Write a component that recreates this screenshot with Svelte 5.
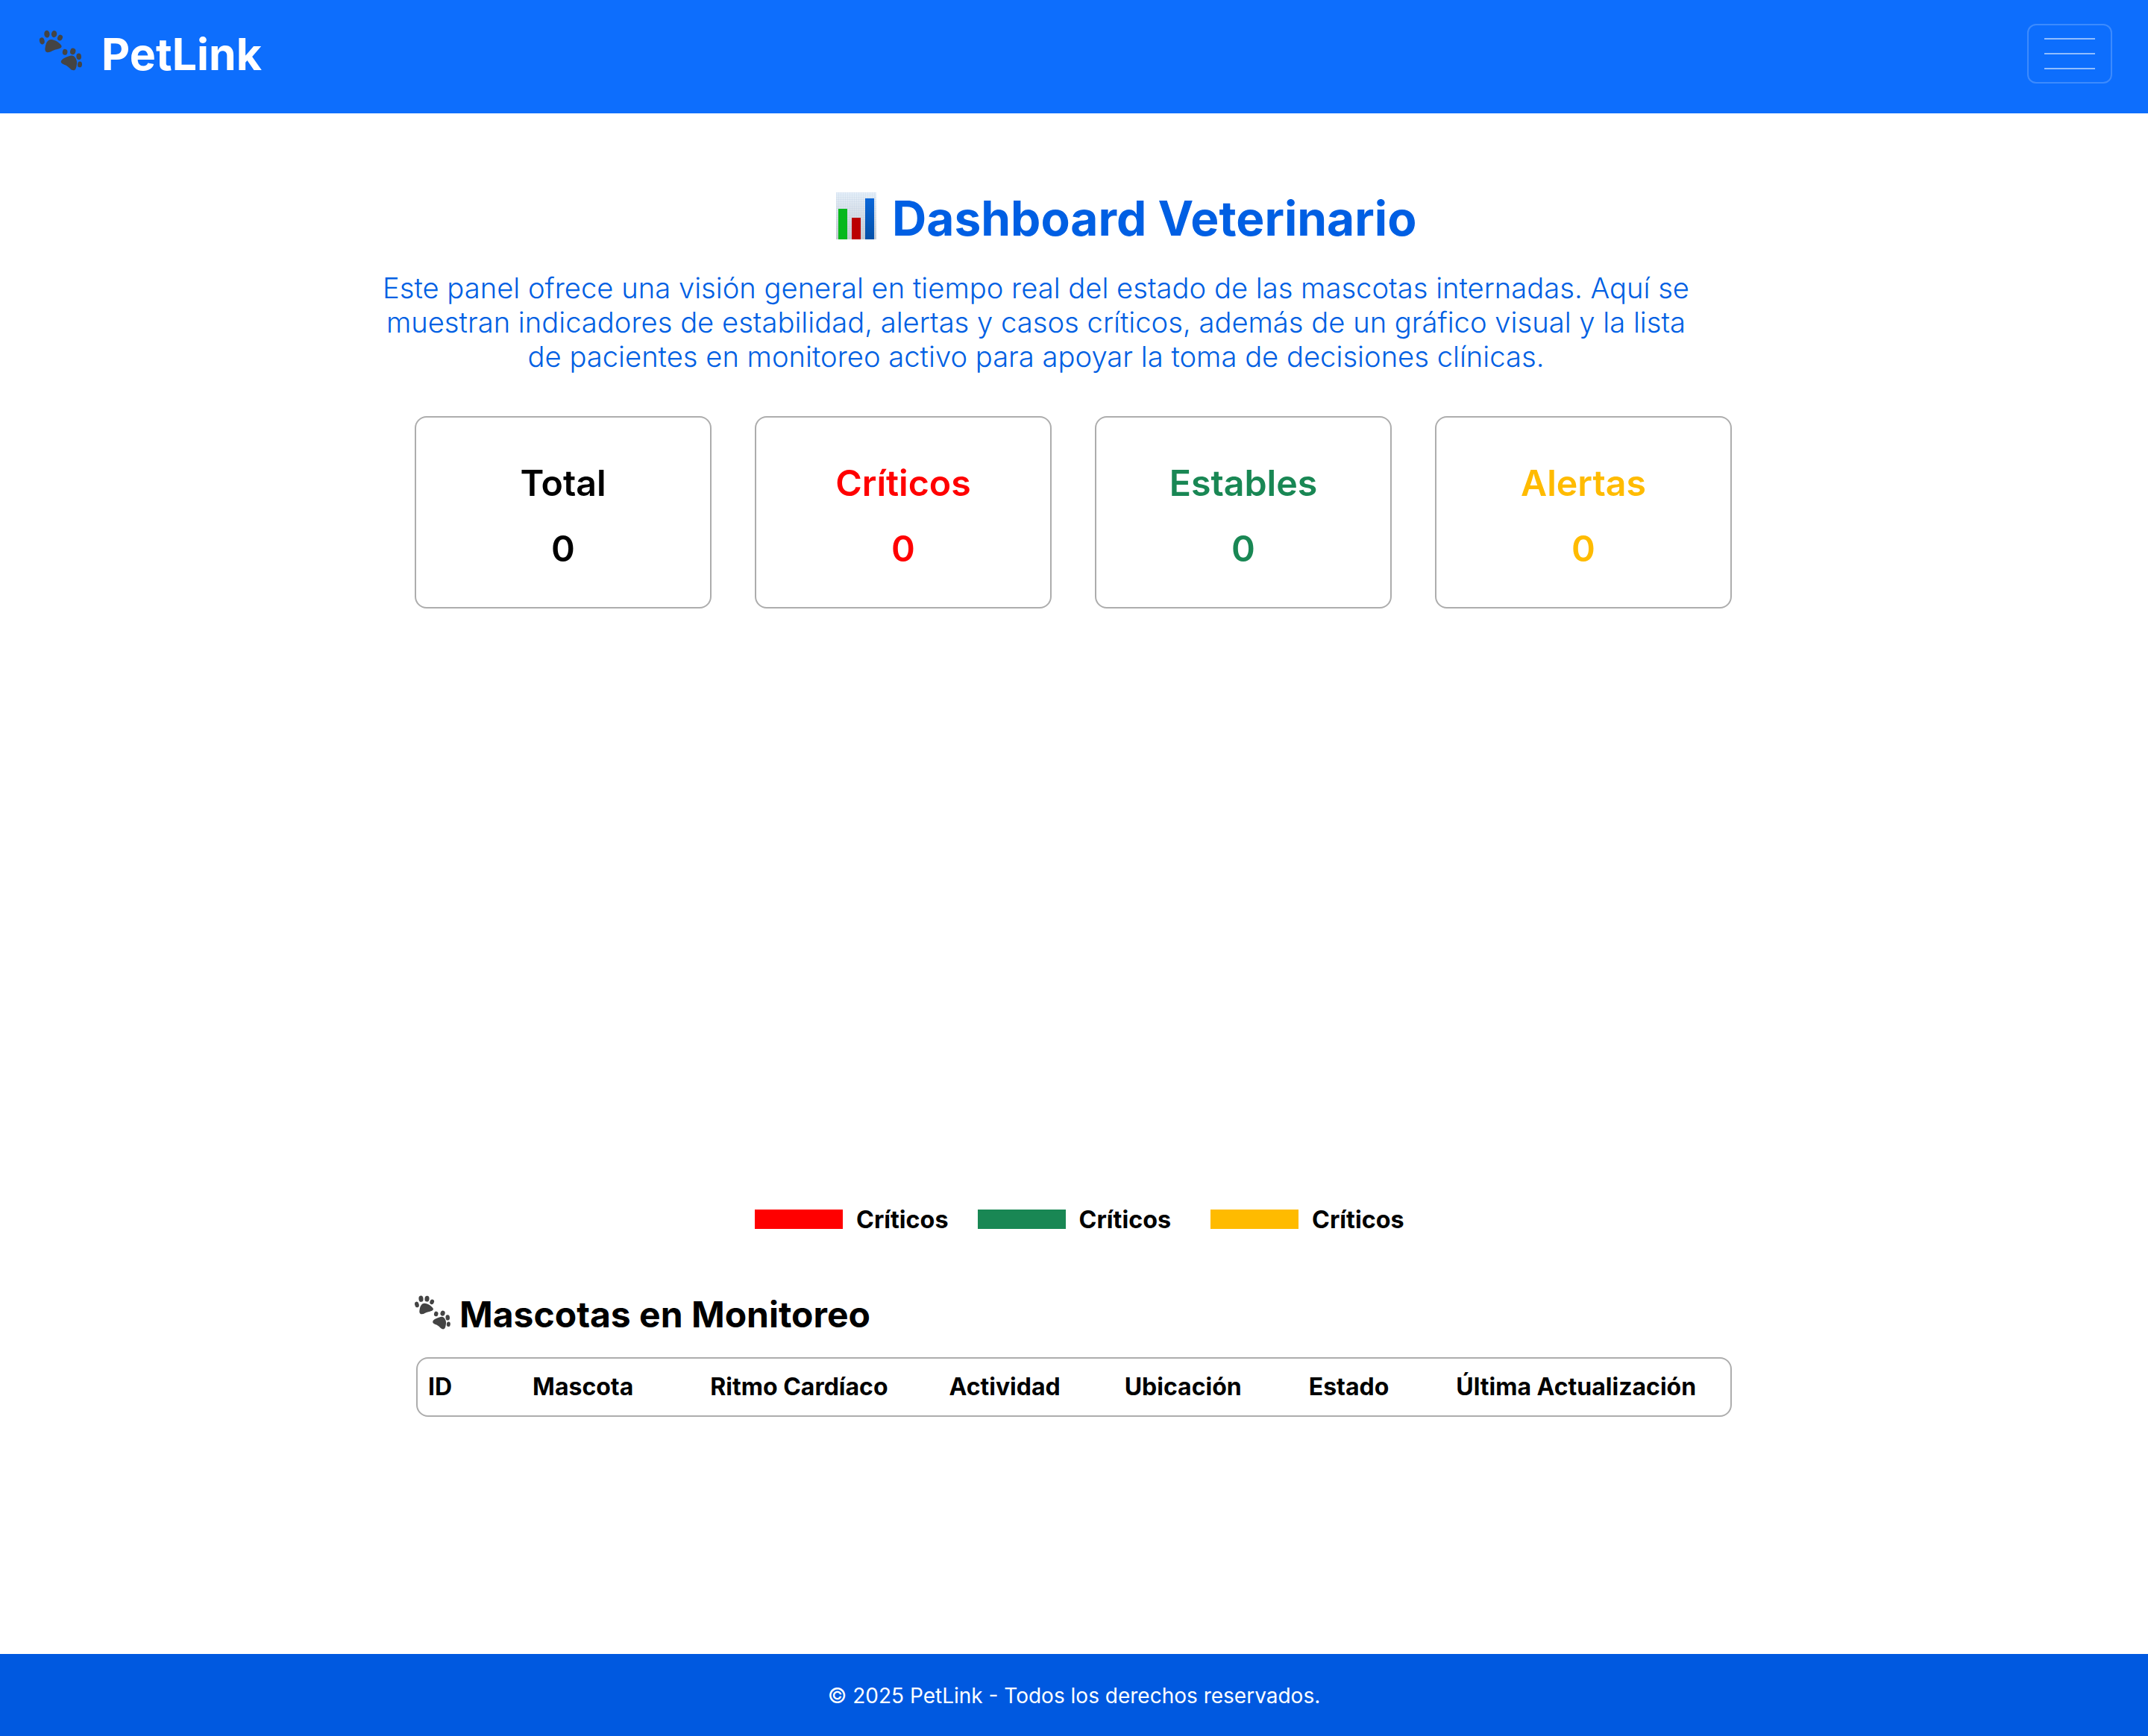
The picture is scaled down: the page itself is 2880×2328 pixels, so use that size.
<script>
  const cards = [
    { label: 'Total', tone: 'black' },
    { label: 'Críticos', tone: 'red' },
    { label: 'Estables', tone: 'green' },
    { label: 'Alertas', tone: 'amber' }
  ];
  const legend = [
    { tone: 'red', gap: 'l1' },
    { tone: 'green', gap: 'l2' },
    { tone: 'amber', gap: 'l3' }
  ];
  const cols = ['ID', 'Mascota', 'Ritmo Cardíaco', 'Actividad', 'Ubicación', 'Estado', 'Última Actualización'];
</script>

{#snippet paws()}
  <svg class="paws" viewBox="34 33 178 166" aria-hidden="true">
    <g fill="#444">
      <ellipse cx="47" cy="78" rx="10" ry="14" transform="rotate(-15 47 78)" />
      <ellipse cx="67" cy="50" rx="11" ry="15" transform="rotate(-5 67 50)" />
      <ellipse cx="96" cy="50" rx="11" ry="14" transform="rotate(5 96 50)" />
      <ellipse cx="120" cy="65" rx="10" ry="12" transform="rotate(25 120 65)" />
      <path d="M84 72C100 72 122 88 126 98 128 106 118 110 106 112 92 114 82 124 70 124 60 124 58 114 60 104 62 90 68 72 84 72Z" />
      <ellipse cx="140" cy="123" rx="10" ry="12" transform="rotate(10 140 123)" />
      <ellipse cx="172" cy="120" rx="11" ry="13" transform="rotate(15 172 120)" />
      <ellipse cx="196" cy="141" rx="10" ry="13" transform="rotate(-5 196 141)" />
      <ellipse cx="200" cy="173" rx="9" ry="12" transform="rotate(5 200 173)" />
      <path d="M124 160C126 150 150 140 165 137 180 135 190 155 188 170 186 185 184 197 174 197 164 197 158 185 146 178 134 172 122 170 124 160Z" />
    </g>
  </svg>
{/snippet}

<header class="nav">
  <a class="brand" href="#top">
    {@render paws()}
    <span>PetLink</span>
  </a>
  <button class="toggler" aria-label="Menu">
    <span></span><span></span><span></span>
  </button>
</header>

<main>
  <h1>
    <svg class="chart" viewBox="0 0 54 63" aria-hidden="true">
      <defs>
        <linearGradient id="bg" x1="0" y1="0" x2="0" y2="1">
          <stop offset="0" stop-color="#e6f0fa" />
          <stop offset="1" stop-color="#c6cad0" />
        </linearGradient>
        <linearGradient id="blue" x1="0" y1="0" x2="0" y2="1">
          <stop offset="0" stop-color="#0a66d8" />
          <stop offset="1" stop-color="#0450a8" />
        </linearGradient>
        <pattern id="grid" width="3" height="3" patternUnits="userSpaceOnUse">
          <path d="M3 0H0V3" fill="none" stroke="#a9bdd4" stroke-width="0.6" opacity="0.5" />
        </pattern>
      </defs>
      <rect width="54" height="63" fill="url(#bg)" />
      <rect width="54" height="63" fill="url(#grid)" />
      <rect x="3" y="22" width="12" height="41" fill="#07b81c" />
      <rect x="21" y="34" width="12" height="29" fill="#bb0000" />
      <rect x="39" y="8" width="12" height="55" fill="url(#blue)" />
    </svg>
    Dashboard Veterinario
  </h1>
  <p class="intro">
    Este panel ofrece una visión general en tiempo real del estado de las mascotas internadas. Aquí se
    muestran indicadores de estabilidad, alertas y casos críticos, además de un gráfico visual y la lista
    de pacientes en monitoreo activo para apoyar la toma de decisiones clínicas.
  </p>

  <section class="cards">
    {#each cards as c}
      <div class="card {c.tone}">
        <h3>{c.label}</h3>
        <p>0</p>
      </div>
    {/each}
  </section>

  <div class="legend">
    {#each legend as l}
      <span class="item {l.gap}"><i class={l.tone}></i>Críticos</span>
    {/each}
  </div>

  <h2>{@render paws()}Mascotas en Monitoreo</h2>
  <div class="table">
    {#each cols as c}
      <span>{c}</span>
    {/each}
  </div>
</main>

<footer>© 2025 PetLink - Todos los derechos reservados.</footer>

<style>
  :global(body) { margin: 0; background: #fff; font-family: Inter, "Liberation Sans", sans-serif; }

  .nav {
    height: 152px; box-sizing: border-box; background: #0d6efd; display: flex; align-items: center;
    justify-content: space-between; padding: 0 48px 9px;
  }
  .brand {
    display: flex; align-items: center; gap: 25px; color: #fff; text-decoration: none;
    font-size: 59px; font-weight: 700; line-height: 1;
  }
  .brand .paws { width: 59px; height: 55px; margin: 0 0 9px 4px; }
  .brand span { margin-top: 2px; }
  .toggler {
    width: 114px; height: 80px; box-sizing: border-box; background: none; padding: 0;
    border: 2px solid rgba(255, 255, 255, 0.2); border-radius: 12px;
    display: flex; flex-direction: column; align-items: center; justify-content: center; gap: 18px;
  }
  .toggler span { width: 68px; height: 2px; background: rgba(255, 255, 255, 0.55); }

  main { height: 2066px; box-sizing: border-box; padding-top: 98px; }
  h1 {
    margin: 0 0 0 1121px; display: flex; align-items: center; gap: 21px; height: 86px;
    color: #005fe3; font-size: 64px; font-weight: 700; line-height: 1; white-space: nowrap;
  }
  .chart { width: 54px; height: 63px; margin-bottom: 8px; }
  .intro {
    margin: 27px 0 0 499px; width: 1780px; text-align: center; color: #005fe3;
    font-size: 38.2px; font-weight: 300; line-height: 46px;
  }

  .cards { margin: 57px 0 0 556px; display: flex; gap: 58px; }
  .card {
    width: 398px; height: 258px; box-sizing: border-box; border: 2px solid #adadad; border-radius: 16px;
    text-align: center; padding-top: 60px;
  }
  .card h3 { margin: 0; font-size: 48.3px; font-weight: 600; line-height: 56px; }
  .card p { margin: 32px 0 0; font-size: 48.3px; font-weight: 600; line-height: 56px; }
  .black { color: #000; }
  .red { color: #f00; }
  .green { color: #198754; }
  .amber { color: #ffbb00; }

  .legend {
    margin: 795px 0 0 1012px; display: flex; align-items: center; height: 48px;
    font-size: 32.3px; font-weight: 700; color: #000;
  }
  .item { display: flex; align-items: center; }
  .item i { width: 118px; height: 26px; margin-right: 18px; }
  .item i.red { background: #f00; }
  .item i.green { background: #198754; }
  .item i.amber { background: #ffbb00; }
  .l2 { margin-left: 39px; }
  .l3 { margin-left: 53px; }

  h2 {
    margin: 71px 0 0 555px; display: flex; align-items: center; gap: 11px; height: 64px;
    font-size: 48px; font-weight: 700; color: #000; white-space: nowrap;
  }
  h2 .paws { width: 50px; height: 46px; margin-bottom: 5px; }
  .table {
    margin: 26px 0 0 558px; width: 1764px; height: 80px; box-sizing: border-box;
    border: 2px solid #adadad; border-radius: 16px; display: flex; align-items: center;
    padding: 0 0 2px 14px; font-size: 32px; font-weight: 700; color: #000; white-space: nowrap;
  }
  .table span:nth-child(2) { margin-left: 108px; }
  .table span:nth-child(3) { margin-left: 103px; }
  .table span:nth-child(4) { margin-left: 82px; }
  .table span:nth-child(5) { margin-left: 86px; }
  .table span:nth-child(6) { margin-left: 90px; }
  .table span:nth-child(7) { margin-left: 90px; }

  footer {
    height: 110px; box-sizing: border-box; padding-top: 1px; background: #0059e0; color: #fff; display: flex;
    align-items: center; justify-content: center; font-size: 28px; font-weight: 400;
  }
</style>
